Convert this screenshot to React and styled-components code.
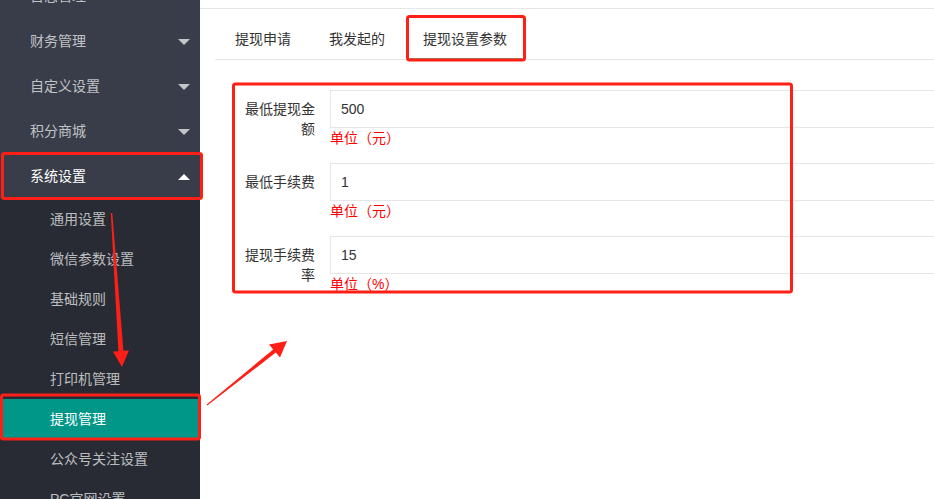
import React from 'react'
import styled, { createGlobalStyle, css } from 'styled-components'

const GlobalStyle = createGlobalStyle`
    html, body {
        margin: 0;
        padding: 0;
    }
    body {
        font-family: "Liberation Sans", "Noto Sans CJK SC", sans-serif;
        font-size: 14px;
        color: #333;
        overflow: hidden;
    }
`

const Page = styled.div`
    position: relative;
    display: flex;
    width: 934px;
    height: 499px;
    overflow: hidden;
    background: #fff;
`

const Sidebar = styled.div`
    width: 200px;
    flex-shrink: 0;
    background: #393D49;
    overflow: hidden;
`

const NavList = styled.div`
    margin-top: -26px;
`

const NavItem = styled.div`
    height: 45px;
    box-sizing: border-box;
    display: flex;
    align-items: center;
    justify-content: space-between;
    padding: 0 10px 3px 30px;
    color: ${p => (p.$open ? '#fff' : 'rgba(255,255,255,.7)')};
`

const Caret = styled.span`
    width: 0;
    height: 0;
    margin-top: 3px;
    border-left: 6px solid transparent;
    border-right: 6px solid transparent;
    ${p => p.$up
        ? css`border-bottom: 6px solid #fff;`
        : css`border-top: 6px solid rgba(255,255,255,.7);`}
`

const Children = styled.div`
    background: #282B33;
`

const ChildItem = styled.div`
    height: 40px;
    line-height: 40px;
    padding-left: 50px;
    color: ${p => (p.$active ? '#fff' : 'rgba(255,255,255,.7)')};
    background: ${p => (p.$active ? '#009688' : 'transparent')};
`

const Main = styled.div`
    flex: 1;
    min-width: 0;
    display: flex;
    flex-direction: column;
`

const TopBar = styled.div`
    height: 8px;
    border-bottom: 1px solid #e6e6e6;
`

const TabWrap = styled.div`
    padding: 10px 0 0 15px;
`

const TabTitle = styled.div`
    display: flex;
    gap: 8px;
    padding-left: 5px;
    height: 40px;
    border-bottom: 1px solid #e6e6e6;
`

const Tab = styled.div`
    position: relative;
    padding: 0 15px;
    line-height: 40px;
    color: #333;
    white-space: nowrap;
    ${p => p.$active && css`
        &::after {
            content: '';
            position: absolute;
            left: 0;
            right: 0;
            bottom: -1px;
            height: 2px;
            background: #5FB878;
        }
    `}
`

const Content = styled.div`
    padding: 30px 0 0 5px;
`

const FormRow = styled.div`
    display: flex;
    margin-bottom: 15px;
`

const Label = styled.label`
    flex-shrink: 0;
    width: 80px;
    padding: 9px 15px;
    line-height: 20px;
    text-align: right;
    color: #333;
`

const Field = styled.div`
    width: 700px;
    flex-shrink: 0;
`

const Input = styled.input`
    display: block;
    width: 100%;
    height: 38px;
    box-sizing: border-box;
    border: 1px solid #e6e6e6;
    padding: 0 10px;
    font: inherit;
    color: #333;
    outline: none;
    background: #fff;
`

const Tip = styled.div`
    color: #f00;
    line-height: 20px;
`

const Overlay = styled.svg`
    position: absolute;
    left: 0;
    top: 0;
    pointer-events: none;
`

const menus = ['日志管理', '财务管理', '自定义设置', '积分商城']
const subs = ['通用设置', '微信参数设置', '基础规则', '短信管理', '打印机管理', '提现管理', '公众号关注设置', 'PC官网设置']
const fields = [
    { label: '最低提现金额', value: '500', unit: '单位（元）' },
    { label: '最低手续费', value: '1', unit: '单位（元）' },
    { label: '提现手续费率', value: '15', unit: '单位（%）' },
]

const RED = '#fe1f17'

const App = () => {
    return (
        <Page>
            <GlobalStyle />
            <Sidebar>
                <NavList>
                    {menus.map(m => (
                        <NavItem key={m}>
                            <span>{m}</span>
                            <Caret />
                        </NavItem>
                    ))}
                    <NavItem $open>
                        <span>系统设置</span>
                        <Caret $up />
                    </NavItem>
                    <Children>
                        {subs.map(s => (
                            <ChildItem key={s} $active={s === '提现管理'}>{s}</ChildItem>
                        ))}
                    </Children>
                </NavList>
            </Sidebar>

            <Main>
                <TopBar />
                <TabWrap>
                    <TabTitle>
                        <Tab>提现申请</Tab>
                        <Tab>我发起的</Tab>
                        <Tab $active>提现设置参数</Tab>
                    </TabTitle>
                    <Content>
                        {fields.map(f => (
                            <FormRow key={f.label}>
                                <Label>{f.label}</Label>
                                <Field>
                                    <Input value={f.value} readOnly />
                                    <Tip>{f.unit}</Tip>
                                </Field>
                            </FormRow>
                        ))}
                    </Content>
                </TabWrap>
            </Main>

            {/* annotation marks drawn over the screenshot */}
            <Overlay width="934" height="499" viewBox="0 0 934 499">
                <g fill="none" stroke={RED} strokeWidth="3">
                    <rect x="2.5" y="153.5" width="199" height="45" rx="2" />
                    <rect x="1.5" y="395" width="198" height="44" rx="2" />
                    <rect x="407.5" y="16.5" width="117" height="43.5" rx="2" />
                    <rect x="233.5" y="84" width="558" height="208" rx="2" />
                </g>
                <g fill={RED}>
                    <polygon points="110.8,213 118.4,351.2 112.9,351.5 122,367 128.9,350.5 123.4,350.8 112.3,213" />
                    <polygon points="206.7,404.6 273.2,349.4 269,344.5 287,341 280,357.5 275.8,352.6 207.3,405.4" />
                </g>
            </Overlay>
        </Page>
    )
}

export default App
